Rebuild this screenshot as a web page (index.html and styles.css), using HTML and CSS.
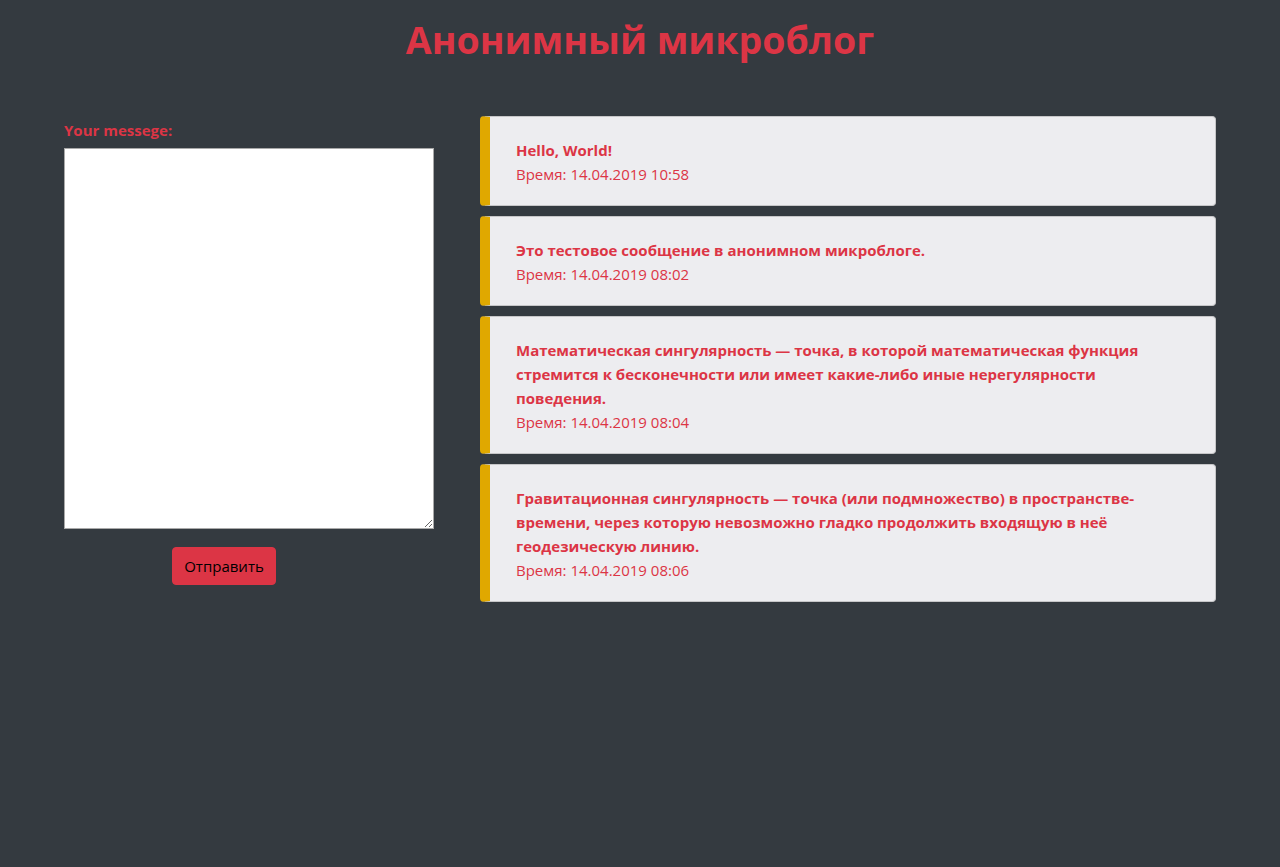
FILE: index.html
```html
<!DOCTYPE html>
<html lang="ru">
<head>
<meta charset="utf-8">
<title>Анонимный микроблог</title>
<link rel="stylesheet" href="styles.css">
</head>
<body>
<h1 class="title">Анонимный микроблог</h1>
<div class="layout">
  <form class="compose">
    <label class="compose-label" for="msg">Your messege:</label>
    <textarea id="msg" class="compose-text"></textarea>
    <div class="compose-actions">
      <button type="button" class="send-btn">Отправить</button>
    </div>
  </form>
  <div class="feed">
    <div class="post">
      <div class="post-text">Hello, World!</div>
      <div class="post-time">Время: 14.04.2019 10:58</div>
    </div>
    <div class="post">
      <div class="post-text">Это тестовое сообщение в анонимном микроблоге.</div>
      <div class="post-time">Время: 14.04.2019 08:02</div>
    </div>
    <div class="post">
      <div class="post-text">Математическая сингулярность — точка, в которой математическая функция стремится к бесконечности или имеет какие-либо иные нерегулярности поведения.</div>
      <div class="post-time">Время: 14.04.2019 08:04</div>
    </div>
    <div class="post">
      <div class="post-text">Гравитационная сингулярность — точка (или подмножество) в пространстве-времени, через которую невозможно гладко продолжить входящую в неё геодезическую линию.</div>
      <div class="post-time">Время: 14.04.2019 08:06</div>
    </div>
  </div>
</div>
</body>
</html>
```
FILE: styles.css
```css
html, body {
  margin: 0;
  padding: 0;
}
body {
  background: #343a40;
  color: #dc3545;
  font-family: "Open Sans", "Noto Sans", sans-serif;
  font-size: 16px;
  line-height: 1.5;
  min-height: 867px;
}
.title {
  margin: 14px 0 0;
  text-align: center;
  font-size: 37.5px;
  line-height: 52px;
  font-weight: 700;
  color: #dc3545;
}
.layout {
  display: flex;
  gap: 46px;
  padding: 50px 64px 0;
}
.compose {
  width: 370px;
  flex: none;
  margin: 0;
  padding-top: 2px;
}
.compose-label {
  display: block;
  font-weight: 700;
  font-size: 15px;
  line-height: 24px;
  margin-bottom: 6px;
}
.compose-text {
  display: block;
  box-sizing: border-box;
  width: 370px;
  height: 381px;
  margin: 0;
  background: #fff;
  border: 1px solid #a9a9a9;
  border-radius: 0;
  padding: 2px;
  font: inherit;
}
.compose-actions {
  padding: 18px 0 0 108px;
}
.send-btn {
  width: 104px;
  height: 38px;
  padding: 0;
  background: #dc3545;
  color: #000;
  border: 1px solid #dc3545;
  border-radius: 4px;
  font-family: inherit;
  font-size: 15px;
  line-height: 24px;
}
.feed {
  flex: 1;
  display: flex;
  flex-direction: column;
  gap: 10px;
}
.post {
  background: #ededf0;
  border: 1px solid #c6c6c8;
  border-left: 10px solid #e0a800;
  border-radius: 4px;
  padding: 21px 60px 19px 26px;
}
.post-text {
  font-weight: 700;
  font-size: 15px;
  line-height: 24px;
}
.post-time {
  font-size: 15px;
  line-height: 24px;
}
```
